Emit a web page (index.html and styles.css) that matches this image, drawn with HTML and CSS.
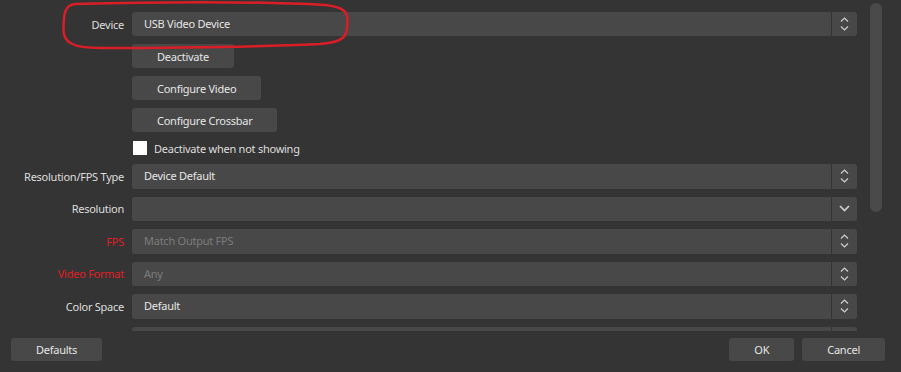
FILE: index.html
```html
<!DOCTYPE html>
<html>
  <head>
    <meta charset="utf-8">
    <title>Video Capture Device Properties</title>
    <link rel="stylesheet" href="styles.css">
  </head>
  <body>
    <div class="dialog">
      <div class="scroll">
        <div class="form">
          <label class="label">Device</label>
          <div class="combo device">
            <span class="value">USB Video Device</span>
            <span class="arrows">
              <svg width="9" height="14" viewBox="0 0 9 14"><path d="M1 4.5 L4.5 1 L8 4.5 M1 9.5 L4.5 13 L8 9.5"/></svg>
            </span>
          </div>

          <button class="btn col2">Deactivate</button>
          <button class="btn col2">Configure Video</button>
          <button class="btn col2">Configure Crossbar</button>

          <div class="check col2">
            <span class="box"></span>
            <span>Deactivate when not showing</span>
          </div>

          <label class="label">Resolution/FPS Type</label>
          <div class="combo">
            <span class="value">Device Default</span>
            <span class="arrows">
              <svg width="9" height="14" viewBox="0 0 9 14"><path d="M1 4.5 L4.5 1 L8 4.5 M1 9.5 L4.5 13 L8 9.5"/></svg>
            </span>
          </div>

          <label class="label">Resolution</label>
          <div class="combo">
            <span class="value"></span>
            <span class="arrows">
              <svg class="drop" width="11" height="7" viewBox="0 0 11 7"><path d="M1 1 L5.5 5.5 L10 1"/></svg>
            </span>
          </div>

          <label class="label warn">FPS</label>
          <div class="combo disabled">
            <span class="value">Match Output FPS</span>
            <span class="arrows">
              <svg width="9" height="14" viewBox="0 0 9 14"><path d="M1 4.5 L4.5 1 L8 4.5 M1 9.5 L4.5 13 L8 9.5"/></svg>
            </span>
          </div>

          <label class="label warn">Video Format</label>
          <div class="combo disabled">
            <span class="value">Any</span>
            <span class="arrows">
              <svg width="9" height="14" viewBox="0 0 9 14"><path d="M1 4.5 L4.5 1 L8 4.5 M1 9.5 L4.5 13 L8 9.5"/></svg>
            </span>
          </div>

          <label class="label">Color Space</label>
          <div class="combo">
            <span class="value">Default</span>
            <span class="arrows">
              <svg width="9" height="14" viewBox="0 0 9 14"><path d="M1 4.5 L4.5 1 L8 4.5 M1 9.5 L4.5 13 L8 9.5"/></svg>
            </span>
          </div>

          <!-- next row, scrolled out of view -->
          <span class="label"></span>
          <div class="combo">
            <span class="value"></span>
            <span class="arrows"></span>
          </div>
        </div>
        <div class="scrollbar"><div class="thumb"></div></div>
      </div>

      <div class="footer">
        <button class="btn">Defaults</button>
        <div class="spacer"></div>
        <button class="btn">OK</button>
        <button class="btn">Cancel</button>
      </div>

      <svg class="mark" width="360" height="54" viewBox="0 0 360 54">
        <path d="M75 4 C150 2 250 1 325 5 C344 7 348 12 347.5 22 C347.5 36 345 42 320 44 C250 47 160 48 100 48 C72 48 63.5 42 63.5 30 C63.5 13 65 5 75 4 Z"/>
      </svg>
    </div>
  </body>
</html>
```

FILE: styles.css
```css
body {
  margin: 0;
  background-color: #343434;
  font-family: "Noto Sans", "Open Sans", sans-serif;
  font-size: 11px;
  letter-spacing: -0.25px;
  color: #dedede;
}
.dialog {
  position: relative;
  height: 372px;
  overflow: hidden;
}
.scroll {
  display: flex;
  height: 331px;
  overflow: hidden;
}
.form {
  flex: 0 0 857px;
  display: grid;
  grid-template-columns: 124px 1fr;
  column-gap: 8px;
  row-gap: 8px;
  padding-top: 12px;
  align-content: start;
}
.label {
  text-align: right;
  align-self: center;
  white-space: nowrap;
}
.label.warn {
  color: #e01e26;
}
.col2 {
  grid-column: 2;
}
.combo {
  display: flex;
  height: 24.5px;
  background-color: #484848;
  border-radius: 3px;
}
.combo.device {
  height: 24px;
}
.combo .value {
  flex: 1;
  padding-left: 12px;
  line-height: 24px;
  color: #e6e6e6;
}
.combo.disabled .value {
  color: #7c7c7c;
}
.combo .arrows {
  width: 25px;
  display: flex;
  align-items: center;
  justify-content: center;
  border-left: 1px solid #343434;
}
.combo .arrows svg path {
  fill: none;
  stroke: #cfcfcf;
  stroke-width: 1.2;
}
.combo .arrows svg.drop path {
  stroke-width: 1.7;
}
.btn {
  justify-self: start;
  height: 24px;
  padding: 0 25px;
  border: none;
  border-radius: 3px;
  background-color: #484848;
  color: #e6e6e6;
  font-family: inherit;
  font-size: 11px;
  letter-spacing: inherit;
}
.check {
  display: flex;
  align-items: center;
  gap: 7px;
  height: 16px;
  padding-left: 1px;
}
.check .box {
  width: 14px;
  height: 14px;
  background-color: #fff;
}
.scrollbar {
  margin: 3px 0 0 13px;
  width: 12px;
}
.thumb {
  height: 209px;
  border-radius: 6px;
  background-color: #4a4a4a;
}
.footer {
  display: flex;
  gap: 8px;
  padding: 7px 16px 0 11px;
}
.footer .btn {
  height: 23px;
}
.spacer {
  flex: 1;
}
.mark {
  position: absolute;
  left: 0;
  top: 0;
  pointer-events: none;
}
.mark path {
  fill: none;
  stroke: #d91e27;
  stroke-width: 2.5;
}
```
